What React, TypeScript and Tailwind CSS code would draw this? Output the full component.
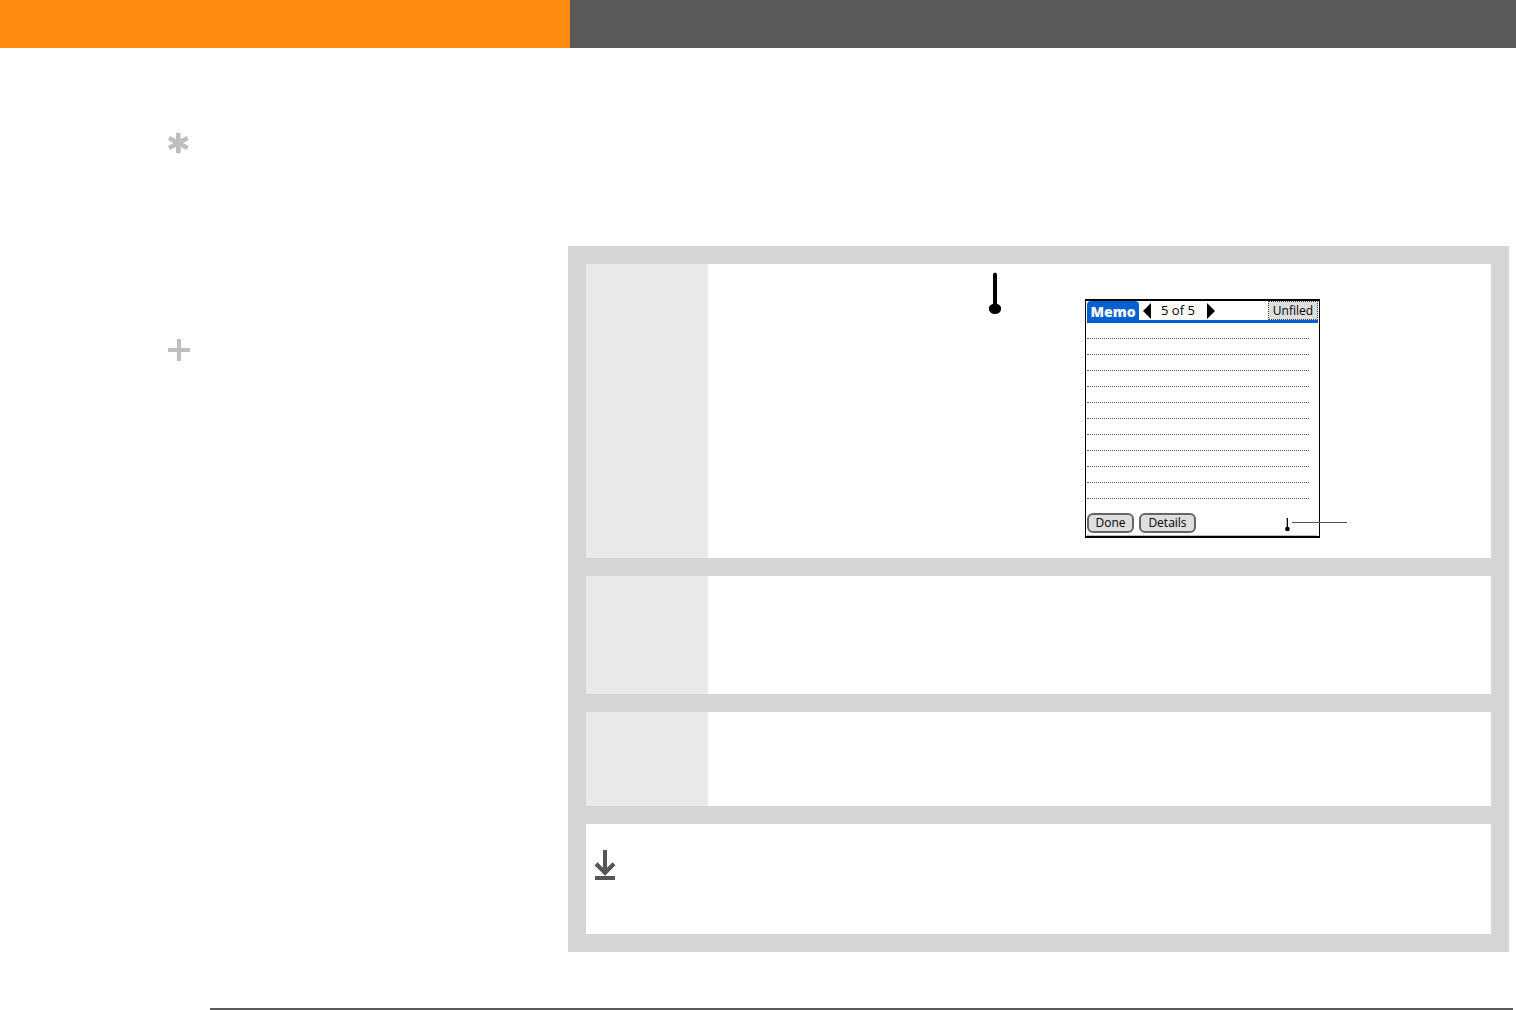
import type { ReactNode } from "react";

function StylusIcon({ className }: { className: string }) {
  return (
    <svg className={className} viewBox="0 0 12 42" aria-hidden="true">
      <path d="M4 2Q6 -1 8 2V32H4Z" fill="#000" />
      <ellipse cx="6" cy="36.7" rx="6.2" ry="5.2" fill="#000" />
    </svg>
  );
}

function SmallStylusIcon() {
  return (
    <svg className="h-[14px] w-[5px]" viewBox="0 0 5 14" aria-hidden="true">
      <path d="M1.7 0H3V10H1.7Z" />
      <rect x="0.3" y="9" width="4.2" height="4" rx="1.2" />
    </svg>
  );
}

function MemoScreen() {
  return (
    <div className="flex h-[239px] w-[235px] flex-col border-t-2 border-r border-b-2 border-l border-black bg-white pl-px font-['Open_Sans',sans-serif] text-black">
      <div className="flex h-[22px] w-[231px] items-end border-b-3 border-[#0060d0]">
        <h2 className="flex h-[19px] w-[52px] items-end justify-center rounded-t-[4px] bg-[#0060d0] font-['Noto_Sans',sans-serif] text-[14px] leading-[16px] font-black text-white">
          Memo
        </h2>
        <button aria-label="Previous memo" className="ml-1 h-[19px]">
          <svg className="h-4 w-2" viewBox="0 0 8 16" aria-hidden="true">
            <path d="M8 0V16L0 8Z" />
          </svg>
        </button>
        <span className="ml-[10px] h-[19px] w-9 text-[13px] leading-[18px] font-medium whitespace-nowrap">5 of 5</span>
        <button aria-label="Next memo" className="ml-[10px] h-[19px]">
          <svg className="h-4 w-2" viewBox="0 0 8 16" aria-hidden="true">
            <path d="M0 0V16L8 8Z" />
          </svg>
        </button>
        <button className="ml-auto h-[19px] w-[50px] border border-dotted border-[#444] bg-[#dedede] text-[12px] leading-[17px] font-medium">
          Unfiled
        </button>
      </div>
      <div className="relative mr-[10px] grid h-[176px] grid-rows-11">
        {Array.from({ length: 11 }, (_, i) => (
          <div key={i} className="border-b border-dotted border-[#666]" />
        ))}
        <textarea
          aria-label="Memo text"
          className="absolute inset-0 resize-none bg-transparent px-1 text-[13px] leading-4 outline-none"
        />
      </div>
      <div className="mt-[14px] flex h-5 items-start gap-[5px]">
        <button className="h-5 w-[47px] rounded-[6px] border-2 border-[#666] bg-[#dedede] text-[12px] leading-4 font-medium">Done</button>
        <button className="h-5 w-[57px] rounded-[6px] border-2 border-[#666] bg-[#dedede] text-[12px] leading-4 font-medium">Details</button>
        <div className="mt-[5px] mr-[-28px] ml-auto flex items-start gap-[2px]">
          <SmallStylusIcon />
          <div className="mt-1 h-px w-[55px] bg-[#555]" />
        </div>
      </div>
      <div className="mt-[2px] mr-[2px] h-px shrink-0 bg-[#bbb]" />
    </div>
  );
}

function Step({ className, children }: { className: string; children?: ReactNode }) {
  return (
    <section className={`flex bg-white ${className}`}>
      <div className="w-[122px] shrink-0 bg-[#e9e9e9]" />
      {children}
    </section>
  );
}

export default function App() {
  return (
    <div className="flex min-h-screen flex-col bg-white">
      <header className="flex h-12 bg-[#5a5a5a]">
        <div className="w-[570px] bg-[#fd8a11]" />
      </header>
      <main className="flex grow">
        <aside className="flex w-[568px] shrink-0 flex-col pt-[84px] pl-[167px]">
          <svg className="h-[22px] w-[22px]" viewBox="0 0 22 22" aria-hidden="true">
            <path d="M11.3 0.8V21.2M2 5.9L20.6 16.1M20.6 5.9L2 16.1" stroke="#bcbec0" strokeWidth="4.6" />
          </svg>
          <svg className="mt-[185px] ml-px h-[22px] w-[22px]" viewBox="0 0 22 22" aria-hidden="true">
            <path d="M11 0V22M0 11H22" stroke="#bcbec0" strokeWidth="4" />
          </svg>
        </aside>
        <div className="mt-[198px] mr-[7px] flex grow flex-col gap-[18px] self-start bg-[#d5d5d5] p-[18px]">
          <Step className="h-[294px]">
            <div className="flex items-start pl-[281px]">
              <StylusIcon className="mt-2 h-[42px] w-3" />
              <div className="mt-[35px] ml-[84px]">
                <MemoScreen />
              </div>
            </div>
          </Step>
          <Step className="h-[118px]" />
          <Step className="h-[94px]" />
          <section className="h-[110px] bg-white pt-[26px] pl-2">
            <svg className="h-[30px] w-[22px]" viewBox="0 0 22 30" fill="none" stroke="#555" aria-hidden="true">
              <path d="M11 0V24" strokeWidth="4" />
              <path d="M2 13.8L11 22.8L20 13.8" strokeWidth="4.2" />
              <path d="M1 28H21" strokeWidth="4" />
            </svg>
          </section>
        </div>
      </main>
      <footer className="mr-[3px] ml-[210px] h-[2px] bg-[#5a5a5a]" />
    </div>
  );
}
